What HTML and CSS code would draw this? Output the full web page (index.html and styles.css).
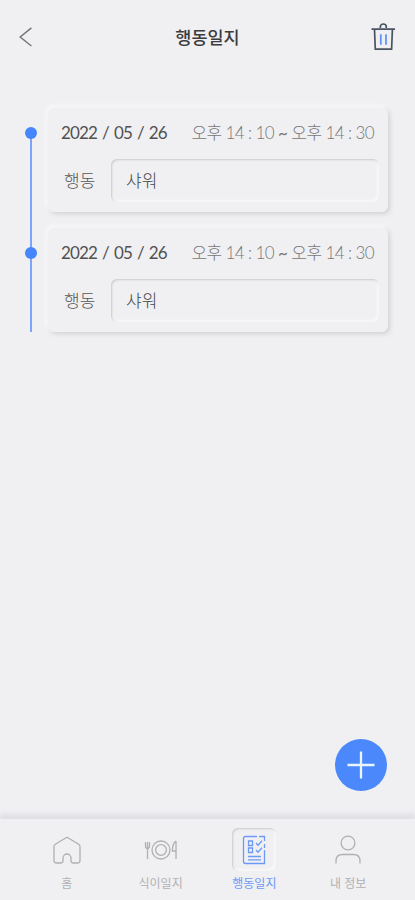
FILE: index.html
```html
<!DOCTYPE html>
<html lang="ko">
<head>
<meta charset="utf-8">
<meta name="viewport" content="width=device-width, initial-scale=1">
<title>행동일지</title>
<link rel="stylesheet" href="styles.css">
</head>
<body>
<div class="app">
  <header class="header">
    <svg class="back" viewBox="0 0 14 20" width="14" height="20"><path d="M12.4 .8 1.2 10l11.2 9"/></svg>
    <h1>행동일지</h1>
    <svg class="trash" viewBox="0 0 26 30" width="26" height="30"><path class="dark" d="M1.500 7.200h23.500M10.300 6V5a3 3 0 0 1 6 0v1M4.500 7.600l.8 19.600h16.300l.8-19.600"/><path class="blue" d="M10.800 12.200v10.600M16 12.200v10.600"/></svg>
  </header>
  <main class="timeline">
    <article class="entry">
      <div class="rail"><i class="dot"></i></div>
      <section class="card">
        <div class="when"><time class="date">2022 / 05 / 26</time><span class="time">오후 14 : 10 <span class="to">~</span> 오후 14 : 30</span></div>
        <div class="action"><span class="label">행동</span><div class="field">샤워</div></div>
      </section>
    </article>
    <article class="entry">
      <div class="rail"><i class="dot"></i></div>
      <section class="card">
        <div class="when"><time class="date">2022 / 05 / 26</time><span class="time">오후 14 : 10 <span class="to">~</span> 오후 14 : 30</span></div>
        <div class="action"><span class="label">행동</span><div class="field">샤워</div></div>
      </section>
    </article>
  </main>
  <button class="add" aria-label="추가"><svg viewBox="0 0 28 28" width="28" height="28"><path d="M14 .5v27M.5 14h27"/></svg></button>
  <nav class="nav">
    <a class="tab"><span class="icon"><svg viewBox="0 0 28 28" width="28" height="28"><path d="M14 1.200 2.300 8.200Q1 9 1 10.500v14Q1 27 3.500 27h4Q10 27 10 24.500V22a4 4 0 0 1 8 0v2.500Q18 27 20.500 27h4Q27 27 27 24.500v-14Q27 9 25.700 8.200Z"/></svg></span><span class="name">홈</span></a>
    <a class="tab"><span class="icon"><svg viewBox="0 0 34 28" width="34" height="28"><path d="M1.500 6v4q0 2.500 2 2.500t2-2.500V6M3.500 6v17M32 5v18M32 5q-4 3-3.500 10H32"/><circle cx="17" cy="14" r="9"/><circle cx="17" cy="14" r="5.400"/></svg></span><span class="name">식이일지</span></a>
    <a class="tab active"><span class="icon"><svg viewBox="0 0 24 30" width="24" height="30"><path d="M15 1.500H3.500q-2 0-2 2v23q0 2 2 2h19V15M17 1.500h5.500V6M22.500 9v4M6.500 6h4v4.500h-4zM6.500 13h4v4.500h-4zM14 8l2 2.300 4-4.500M14 15l2 2.300 4-4.500M6 21.500h13M6 24.800h13"/></svg></span><span class="name">행동일지</span></a>
    <a class="tab"><span class="icon"><svg viewBox="0 0 28 30" width="28" height="30"><circle cx="14" cy="8" r="6.900"/><path d="M2 28.500V26q0-6.500 6.500-6.500h11q6.500 0 6.500 6.500v2.500"/></svg></span><span class="name">내 정보</span></a>
  </nav>
</div>
</body>
</html>
```
FILE: styles.css
```css
* { box-sizing: border-box; }
body { margin: 0; background: #f0f0f3; color: #333; font-family: Lato, "Noto Sans CJK KR", sans-serif; }
svg { display: block; fill: none; stroke: currentColor; stroke-width: 1.3; }
.app { position: relative; display: flex; flex-direction: column; width: 100%; height: 900px; overflow: hidden; }
.header { display: flex; align-items: center; justify-content: space-between; height: 74px; padding: 0 19px; }
.header h1 { margin: 0 0 0 12px; font-family: "Noto Sans CJK KR", sans-serif; font-size: 17.5px; line-height: 26px; font-weight: 500; color: #3c3c3e; }
.back { color: #777; stroke-width: 1.5; }
.trash { stroke-width: 1.7; }
.trash .dark { stroke: #4b5362; }
.trash .blue { stroke: #5c90f3; }
.timeline { flex: 1; display: flex; flex-direction: column; gap: 16px; padding: 34px 27px 0 25px; }
.entry { display: flex; gap: 11px; height: 104px; }
.rail { position: relative; display: flex; justify-content: center; width: 12px; padding-top: 19px; }
.rail::before { content: ""; position: absolute; left: 5px; top: 24px; bottom: -40px; width: 2px; background: #7ba4fa; }
.entry:last-child .rail::before { bottom: 0; }
.dot { position: relative; width: 12px; height: 12px; border-radius: 50%; background: #4586fa; }
.card { flex: 1; padding: 13px 9px 9px 13px; border-radius: 6px; background: #f0f0f2; box-shadow: 2px 2px 4px rgba(170, 170, 176, .42), -2px -2px 4px #fafafc; }
.when { display: flex; justify-content: space-between; height: 24px; padding-right: 5px; line-height: 24px; white-space: nowrap; }
.date { font-size: 17px; letter-spacing: -.85px; word-spacing: 1.5px; color: #505052; }
.time { font-size: 17px; font-weight: 300; letter-spacing: -.6px; color: #777; }
.to { font-weight: 400; }
.action { display: flex; align-items: center; height: 43px; margin-top: 14px; }
.label { width: 50px; padding-left: 3px; font-size: 17px; line-height: 40px; font-weight: 300; color: #555; }
.field { flex: 1; height: 43px; padding-left: 15px; border-radius: 6px; font-size: 17px; line-height: 43px; color: #444; font-weight: 300; box-shadow: inset 1px 1px 2px rgba(165, 165, 172, .5), inset -2px -2px 2px #f8f8fa; }
.add { position: absolute; left: 335px; top: 739px; display: grid; place-items: center; width: 52px; height: 52px; padding: 0; border: 0; border-radius: 50%; background: #4a88fb; color: #e9f5ff; }
.add svg { stroke-width: 2.3; }
.nav { display: grid; grid-template-columns: repeat(4, 1fr); height: 81px; padding: 9px 20px 0; background: #f0f0f3; box-shadow: 0 -5px 4px rgba(190, 190, 196, .3); }
.tab { display: flex; flex-direction: column; align-items: center; color: #b0b0b3; }
.icon { display: grid; place-items: center; width: 44px; height: 43px; border-radius: 6px; }
.name { margin-top: 4px; font-size: 12px; line-height: 18px; white-space: nowrap; }
.active { color: #6c99f6; }
.active .icon { box-shadow: inset 1px 1px 2px rgba(165, 165, 172, .5), inset -2px -2px 2px #f8f8fa; }
```
